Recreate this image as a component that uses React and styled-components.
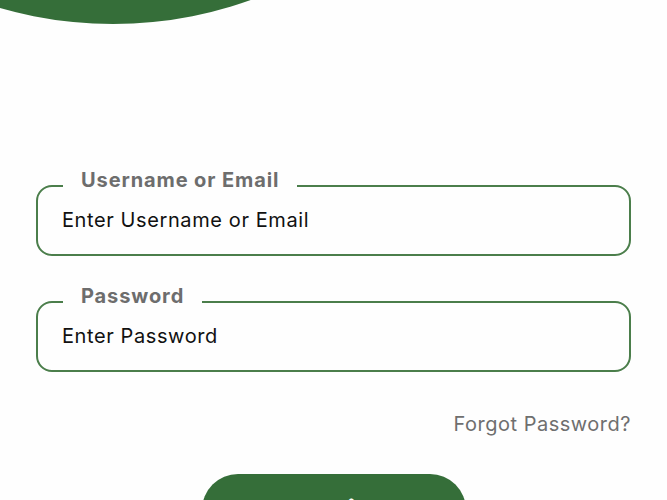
import React from "react";
import styled, { createGlobalStyle } from "styled-components";

const Global = createGlobalStyle`
  html, body {
    margin: 0;
    padding: 0;
    overflow: hidden;
    background: #fefefe;
    font-family: "Inter", "Liberation Sans", sans-serif;
  }
  * { box-sizing: border-box; }
`;

const Page = styled.div`
  position: relative;
  width: 667px;
  height: 500px;
  overflow: hidden;
  padding: 168px 36px 0;
  display: flex;
  flex-direction: column;
`;

const Blob = styled.div`
  position: absolute;
  left: -294px;
  top: -790px;
  width: 814px;
  height: 814px;
  border-radius: 50%;
  background: #356e39;
`;

const Form = styled.form`
  display: flex;
  flex-direction: column;
  gap: 28px;
`;

const Field = styled.fieldset`
  margin: 0;
  padding: 0 24px 18px;
  border: 2px solid #4b7e4b;
  border-radius: 16px;
  display: flex;
  align-items: center;
`;

const Legend = styled.legend`
  margin-left: 1px;
  padding: 0 18px 12px;
  font-size: 20px;
  font-weight: 700;
  color: #6d6d6d;
  line-height: 24px;
  letter-spacing: 0.9px;
`;

const Input = styled.input`
  flex: 1;
  height: 32px;
  border: none;
  outline: none;
  background: transparent;
  font-family: inherit;
  font-size: 20px;
  letter-spacing: 0.6px;
  color: #111;
  padding: 0;
  margin: 0;
  &::placeholder {
    color: #111;
    opacity: 1;
  }
`;

const Forgot = styled.a`
  align-self: flex-end;
  margin-top: 40px;
  font-size: 20px;
  letter-spacing: 0.5px;
  color: #6f6f6f;
  text-decoration: none;
`;

const Button = styled.button`
  align-self: center;
  margin-top: 38px;
  flex-shrink: 0;
  width: 264px;
  height: 74px;
  border: none;
  border-radius: 36px;
  background: #356e39;
  color: #fff;
  font-family: inherit;
  font-size: 30px;
  font-weight: 700;
`;

export default function App() {
  return (
    <>
      <Global />
      <Page>
        <Blob />
        <Form onSubmit={(e) => e.preventDefault()}>
          <Field>
            <Legend>Username or Email</Legend>
            <Input type="text" placeholder="Enter Username or Email" />
          </Field>
          <Field>
            <Legend>Password</Legend>
            <Input type="password" placeholder="Enter Password" />
          </Field>
        </Form>
        <Forgot href="#">Forgot Password?</Forgot>
        <Button type="button">Login</Button>
      </Page>
    </>
  );
}
